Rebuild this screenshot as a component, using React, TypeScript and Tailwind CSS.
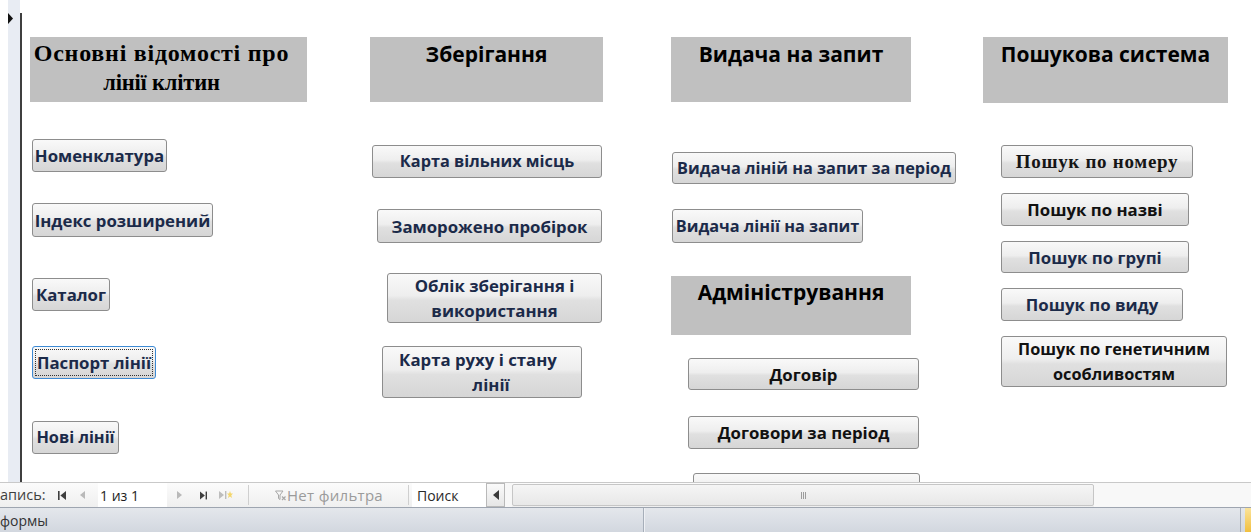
import React from "react";

function FormButton({
  className,
  children,
  focused,
}: {
  className: string;
  children?: React.ReactNode;
  focused?: boolean;
}) {
  return (
    <button
      type="button"
      className={`relative flex shrink-0 items-center justify-center whitespace-nowrap rounded-[3px] border text-center font-bold leading-[25px] bg-[linear-gradient(to_bottom,#f9f9f9_0%,#eeeeee_45%,#e0e0e0_55%,#d6d6d6_100%)] ${
        focused ? "border-[#3d8ad4]" : "border-[#8d8d8d]"
      } ${className}`}
    >
      {focused && (
        <span className="pointer-events-none absolute inset-[2px] border border-dotted border-[#333]" />
      )}
      <span className="relative">{children}</span>
    </button>
  );
}

function Header({ className, children }: { className: string; children: React.ReactNode }) {
  return <div className={`shrink-0 bg-[#c0c0c0] text-center font-bold text-black ${className}`}>{children}</div>;
}

const btn = "font-['Open_Sans',sans-serif] text-[16.8px] text-[#1b2a49]";
const btnSm = "font-['Open_Sans',sans-serif] text-[16.3px] text-[#1b2a49]";
const head = "font-['Open_Sans',sans-serif] text-[21px] leading-[28px]";

function NavBar() {
  return (
    <div className="flex h-[25px] shrink-0 items-stretch border-t border-[#c9c9c9] bg-[linear-gradient(to_bottom,#fbfbfb,#efefef)] font-['Open_Sans',sans-serif] text-[14px]">
      <div className="flex w-[58px] items-center text-[14.5px] text-[#3f3f3f]">апись:</div>
      {/* first record */}
      <div className="flex w-[22px] items-center">
        <svg width="8" height="9" viewBox="0 0 8 9" fill="#3e3e3e">
          <rect x="0" y="0" width="1.6" height="9" />
          <polygon points="8,0 2.4,4.5 8,9" />
        </svg>
      </div>
      {/* previous record */}
      <div className="flex w-[18px] items-center">
        <svg width="5" height="8" viewBox="0 0 5 8" fill="#b9b9b9">
          <polygon points="5,0 0,4 5,8" />
        </svg>
      </div>
      <div className="flex w-[69px] items-center bg-white pl-[2px] text-[14px] text-[#1e1e1e]">1 из 1</div>
      {/* next record */}
      <div className="flex w-[22px] items-center pl-[10px]">
        <svg width="5" height="8" viewBox="0 0 5 8" fill="#b9b9b9">
          <polygon points="0,0 5,4 0,8" />
        </svg>
      </div>
      {/* last record */}
      <div className="flex w-[18px] items-center pl-[11px]">
        <svg width="8" height="9" viewBox="0 0 8 9" fill="#3e3e3e">
          <polygon points="0,0 5.6,4.5 0,9" />
          <rect x="6.4" y="0" width="1.6" height="9" />
        </svg>
      </div>
      {/* new record */}
      <div className="flex w-[28px] items-center pl-[12px]">
        <svg width="14" height="10" viewBox="0 0 14 10">
          <polygon points="0,1 5,5 0,9" fill="#bdbdbd" />
          <rect x="6" y="1" width="1.4" height="8" fill="#bdbdbd" />
          <path d="M11 1 L11.9 3.6 L14 3.6 L12.3 5.3 L13 8 L11 6.4 L9 8 L9.7 5.3 L8 3.6 L10.1 3.6 Z" fill="#f3d66b" />
        </svg>
      </div>
      <div className="w-[13px]" />
      <div className="my-[2px] w-px bg-[#cfcfcf]" />
      <div className="flex w-[159px] items-center pl-[26px] text-[15px] tracking-[0.3px] text-[#9b9b9b]">
        <svg width="11" height="11" viewBox="0 0 11 11" className="mr-[1px] shrink-0">
          <path d="M0.5 1 L8 1 L5 5 L5 9.5 L3.5 8.5 L3.5 5 Z" fill="none" stroke="#a8a8a8" strokeWidth="1" />
          <path d="M7 6.5 L10.5 10 M10.5 6.5 L7 10" stroke="#a8a8a8" strokeWidth="1.2" />
        </svg>
        Нет фильтра
      </div>
      <div className="my-[2px] w-px bg-[#cfcfcf]" />
      <div className="w-[3px]" />
      <div className="flex w-[74px] items-center bg-white pl-[5px] text-[14px] text-[#2a2a2a]">Поиск</div>
      {/* horizontal scroll bar */}
      <div className="flex w-[19px] items-center justify-center border border-[#b9b9b9] bg-[linear-gradient(to_bottom,#fafafa,#e6e6e6)]">
        <svg width="6" height="10" viewBox="0 0 6 10" fill="#3a3a3a">
          <polygon points="6,0 0,5 6,10" />
        </svg>
      </div>
      <div className="w-[7px] bg-[#f7f7f7]" />
      <div className="my-[1px] flex w-[582px] items-center justify-center rounded-[2px] border border-[#c6c6c6] bg-[linear-gradient(to_bottom,#f5f5f5,#e8e8e8)]">
        <div className="flex gap-[1px]">
          <div className="h-[7px] w-px bg-[#9c9c9c]" />
          <div className="h-[7px] w-px bg-[#9c9c9c]" />
          <div className="h-[7px] w-px bg-[#9c9c9c]" />
        </div>
      </div>
      <div className="flex-1 bg-[#f8f8f8]" />
    </div>
  );
}

function StatusBar() {
  return (
    <div className="flex h-[25px] shrink-0 items-stretch border-t border-[#9ea5b0] bg-[linear-gradient(to_bottom,#e4e7ec,#d2d7df)] font-['Open_Sans',sans-serif] text-[14px] text-[#333]">
      <div className="flex w-[643px] items-center">формы</div>
      <div className="w-px bg-[#a6aeb9]" />
      <div className="w-px bg-[#eef0f4]" />
      <div className="flex-1" />
      <div className="w-px bg-[#a6aeb9]" />
      <div className="w-[4px]" />
      <div className="w-[6px] bg-[linear-gradient(to_bottom,#fbe39a,#f1bf3f)]" />
    </div>
  );
}

export default function App() {
  return (
    <div className="flex h-[532px] w-[1251px] flex-col overflow-hidden bg-white">
      <div className="flex h-[482px] shrink-0 overflow-hidden">
        {/* record selector */}
        <div className="w-[8px] shrink-0" />
        <div className="relative w-[12px] shrink-0 bg-[#e8ecf3]">
          <svg width="6" height="11" viewBox="0 0 6 11" className="absolute left-0 top-[13px]">
            <polygon points="0,0 5,5.5 0,11" fill="#111" />
          </svg>
        </div>
        <div className="mt-[13px] w-[2px] shrink-0 bg-[#3f3f3f]" />

        {/* column 1 */}
        <div className="ml-[8px] flex w-[277px] shrink-0 flex-col items-start">
          <Header className="mt-[37px] h-[65px] w-[277px] pt-[1px] pr-[14px] font-['Liberation_Serif',serif] leading-[30px]">
            <div className="text-[24px] tracking-[0.75px]">Основні відомості про</div>
            <div className="text-[22.5px] tracking-[-0.2px]">лінії клітин</div>
          </Header>
          <FormButton className={`mt-[37px] ml-[2px] h-[33px] w-[135px] ${btn}`}>Номенклатура</FormButton>
          <FormButton className={`mt-[31px] ml-[2px] h-[34px] w-[181px] ${btn}`}>Індекс розширений</FormButton>
          <FormButton className={`mt-[41px] ml-[2px] h-[33px] w-[78px] ${btn}`}>Каталог</FormButton>
          <FormButton focused className={`mt-[35px] ml-[2px] h-[33px] w-[124px] ${btn}`}>
            Паспорт лінії
          </FormButton>
          <FormButton className={`mt-[42px] ml-[2px] h-[33px] w-[87px] ${btnSm}`}>Нові лінії</FormButton>
        </div>

        {/* column 2 */}
        <div className="ml-[63px] flex w-[233px] shrink-0 flex-col items-start">
          <Header className={`mt-[37px] h-[65px] w-[233px] pt-[3px] ${head}`}>Зберігання</Header>
          <FormButton className={`mt-[43px] ml-[2px] h-[33px] w-[230px] ${btnSm}`}>Карта вільних місць</FormButton>
          <FormButton className={`mt-[31px] ml-[7px] h-[34px] w-[225px] ${btn}`}>Заморожено пробірок</FormButton>
          <FormButton className={`mt-[30px] ml-[17px] h-[50px] w-[215px] ${btn}`}>
            Облік зберігання і
            <br />
            використання
          </FormButton>
          <FormButton className={`mt-[23px] ml-[12px] h-[52px] w-[200px] ${btn}`}>
            <span className="mr-[8px]">Карта руху і стану</span>
            <br />
            <span className="ml-[18px]">лінії</span>
          </FormButton>
        </div>

        {/* column 3 */}
        <div className="ml-[68px] flex w-[285px] shrink-0 flex-col items-start">
          <Header className={`mt-[37px] h-[65px] w-[240px] pt-[3px] ${head}`}>Видача на запит</Header>
          <FormButton className={`mt-[50px] ml-[1px] h-[32px] w-[284px] ${btnSm}`}>Видача ліній на запит за період</FormButton>
          <FormButton className={`mt-[25px] ml-[1px] h-[34px] w-[191px] ${btnSm}`}>Видача лінії на запит</FormButton>
          <Header className={`mt-[33px] h-[59px] w-[240px] pt-[2px] ${head}`}>Адміністрування</Header>
          <FormButton className={`mt-[23px] ml-[17px] h-[32px] w-[231px] ${btn} text-[#111]`}>Договір</FormButton>
          <FormButton className={`mt-[26px] ml-[17px] h-[33px] w-[231px] ${btn} text-[#111]`}>Договори за період</FormButton>
          <FormButton className={`mt-[24px] ml-[22px] h-[33px] w-[227px] ${btn}`} />
        </div>

        {/* column 4 */}
        <div className="ml-[27px] flex w-[245px] shrink-0 flex-col items-start">
          <Header className={`mt-[37px] h-[66px] w-[245px] pt-[3px] ${head}`}>Пошукова система</Header>
          <FormButton className="mt-[42px] ml-[18px] h-[33px] w-[192px] font-['Liberation_Serif',serif] text-[19px] tracking-[0.7px] text-[#151515]">
            Пошук по номеру
          </FormButton>
          <FormButton className={`mt-[15px] ml-[18px] h-[33px] w-[188px] ${btn} text-[#111]`}>Пошук по назві</FormButton>
          <FormButton className={`mt-[15px] ml-[18px] h-[32px] w-[188px] ${btn}`}>Пошук по групі</FormButton>
          <FormButton className={`mt-[15px] ml-[18px] h-[33px] w-[182px] ${btn}`}>Пошук по виду</FormButton>
          <FormButton className={`mt-[15px] ml-[18px] h-[51px] w-[226px] ${btnSm} text-[#111]`}>
            Пошук по генетичним
            <br />
            особливостям
          </FormButton>
        </div>
      </div>
      <NavBar />
      <StatusBar />
    </div>
  );
}
